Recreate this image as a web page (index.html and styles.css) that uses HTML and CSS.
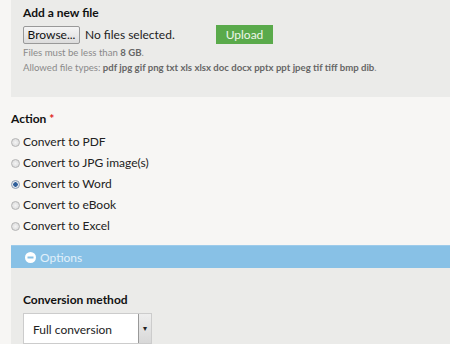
FILE: index.html
```html
<!DOCTYPE html>
<html lang="en">

<head>
    <meta charset="UTF-8">
    <title>Convert file</title>
    <link rel="stylesheet" href="styles.css">
</head>

<body>
    <div class="page">
        <div class="upload-box">
            <h3>Add a new file</h3>
            <div class="file-row">
                <button type="button" class="browse-btn">Browse...</button>
                <span class="file-name">No files selected.</span>
                <button type="button" class="upload-btn">Upload</button>
            </div>
            <p class="hint">Files must be less than <b>8 GB</b>.</p>
            <p class="hint">Allowed file types: <b>pdf jpg gif png txt xls xlsx doc docx pptx ppt jpeg tif tiff bmp dib</b>.</p>
        </div>

        <div class="action">
            <h3>Action <span class="req">*</span></h3>
            <label class="radio"><input type="radio" name="action"> Convert to PDF</label>
            <label class="radio"><input type="radio" name="action"> Convert to JPG image(s)</label>
            <label class="radio"><input type="radio" name="action" checked> Convert to Word</label>
            <label class="radio"><input type="radio" name="action"> Convert to eBook</label>
            <label class="radio"><input type="radio" name="action"> Convert to Excel</label>
        </div>

        <div class="options-bar">
            <svg width="11" height="11" viewBox="0 0 11 11"><circle cx="5.5" cy="5.5" r="5.5" fill="#fff"/><rect x="2.5" y="4.5" width="6" height="2" fill="#88c1e6"/></svg>
            <span>Options</span>
        </div>
        <div class="options-body">
            <h3>Conversion method</h3>
            <div class="select">
                <span>Full conversion</span>
                <span class="select-arrow">&#9662;</span>
            </div>
        </div>
    </div>
</body>

</html>
```

FILE: styles.css
```css
* {
    box-sizing: border-box;
    margin: 0;
    padding: 0;
}

body {
    font-family: 'Lato', sans-serif;
    font-size: 12px;
    color: #222;
    background-color: #f7f6f4;
    overflow: hidden;
}

.page {
    padding-left: 11px;
}

h3 {
    font-size: 12px;
    font-weight: bold;
    color: #111;
}

.upload-box {
    background-color: #ebebe9;
    padding: 5px 12px 0;
    height: 97px;
}

.file-row {
    display: flex;
    align-items: center;
    margin-top: 5px;
    height: 19px;
}

.browse-btn {
    font-family: inherit;
    font-size: 12px;
    width: 57px;
    height: 18px;
    border: 1px solid #999;
    border-radius: 2px;
    background: linear-gradient(#f5f5f5, #dcdcdc);
    color: #111;
}

.file-name {
    margin-left: 5px;
    width: 131px;
}

.upload-btn {
    font-family: inherit;
    font-size: 12px;
    width: 57px;
    height: 19px;
    border: none;
    background-color: #5aaa4b;
    color: #eef6ea;
}

.hint {
    font-size: 9.6px;
    color: #8a8a8a;
    margin-top: 3px;
    line-height: 12px;
}

.hint b {
    color: #666;
}

.action {
    padding-top: 14px;
    height: 148px;
}

.req {
    color: #e02020;
}

.action h3 {
    margin-bottom: 5px;
}

.radio {
    display: flex;
    align-items: center;
    height: 21px;
    color: #222;
}

.radio input {
    appearance: none;
    width: 9px;
    height: 9px;
    margin: 1px 3px 0 0;
    border: 1px solid #b4b4b4;
    border-radius: 50%;
    background: radial-gradient(#f4f4f4, #d6d6d6);
}

.radio input:checked {
    border-color: #8a9bb0;
    background: radial-gradient(circle, #2f5f9a 0, #2f5f9a 2px, #e4e8ee 2.5px);
}

.options-bar {
    display: flex;
    align-items: center;
    gap: 4px;
    height: 23px;
    background-color: #88c1e6;
    border-top: 1px solid #9dcbea;
    padding-left: 14px;
    color: #e0f0fa;
}

.options-body {
    background-color: #ebebe9;
    padding: 24px 12px 0;
    height: 80px;
}

.select {
    display: flex;
    justify-content: space-between;
    margin-top: 6px;
    width: 129px;
    height: 31px;
    border: 1px solid #ccc;
    background-color: #fff;
}

.select span:first-child {
    padding: 8px 0 0 9px;
}

.select-arrow {
    width: 13px;
    border-left: 1px solid #999;
    background: linear-gradient(#eee, #d8d8d8);
    font-size: 8px;
    text-align: center;
    padding-top: 9px;
}
```
